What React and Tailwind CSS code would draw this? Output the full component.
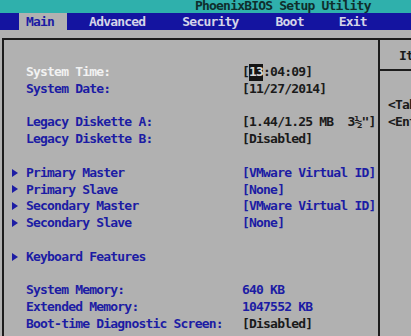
import React from "react";

const ROWS = [
  { label: "System Time:", value: "time", labelTone: "white" },
  { label: "System Date:", value: "[11/27/2014]", valueTone: "black" },
  null,
  { label: "Legacy Diskette A:", value: "[1.44/1.25 MB  3½\"]", valueTone: "black" },
  { label: "Legacy Diskette B:", value: "[Disabled]", valueTone: "black" },
  null,
  { label: "Primary Master", value: "[VMware Virtual ID]", arrow: true },
  { label: "Primary Slave", value: "[None]", arrow: true },
  { label: "Secondary Master", value: "[VMware Virtual ID]", arrow: true },
  { label: "Secondary Slave", value: "[None]", arrow: true },
  null,
  { label: "Keyboard Features", arrow: true },
  null,
  { label: "System Memory:", value: "640 KB" },
  { label: "Extended Memory:", value: "1047552 KB" },
  { label: "Boot-time Diagnostic Screen:", value: "[Disabled]", valueTone: "black" },
];

const TABS = [
  { name: "Main", pad: "pl-[7px] pr-[13px]", active: true },
  { name: "Advanced", pad: "pl-[22px]" },
  { name: "Security", pad: "pl-[37px]" },
  { name: "Boot", pad: "pl-[37px]" },
  { name: "Exit", pad: "pl-[35px]" },
];

function Arrow() {
  return (
    <svg width="6" height="8" viewBox="0 0 6 8" className="mt-[-1px]">
      <path d="M0 0 L6 4 L0 8 Z" fill="#1c1ca4" />
    </svg>
  );
}

function Row({ row }) {
  if (!row) return <div className="h-[16.8px]" />;
  const labelColor = row.labelTone === "white" ? "text-[#f2f2f2]" : "text-[#1c1ca4]";
  const valueColor = row.valueTone === "black" ? "text-[#1a1a1a]" : "text-[#1c1ca4]";
  return (
    <div className="flex items-center h-[16.8px] whitespace-pre">
      <div className="w-[14px] flex items-center">{row.arrow && <Arrow />}</div>
      <div className={`w-[216px] ${labelColor}`}>{row.label}</div>
      {row.value === "time" ? (
        <div className="text-[#1a1a1a] flex">
          <span>[</span>
          <span className="bg-[#141414] text-[#d8d8d8]">13</span>
          <span>:04:09]</span>
        </div>
      ) : (
        <div className={valueColor}>{row.value}</div>
      )}
    </div>
  );
}

export default function App() {
  return (
    <div className="w-[411px] h-[336px] overflow-hidden bg-[#b1b1b1] font-['DejaVu_Sans_Mono',monospace] font-bold text-[13px] tracking-[-0.8px]">
      {/* title bar */}
      <div className="h-[13px] bg-[#2fb0ac] text-[#0f2e2c] leading-[13px] pl-[195px] whitespace-pre overflow-hidden">
        <div className="-mt-[1px]">PhoenixBIOS Setup Utility</div>
      </div>

      <div className="flex h-[323px]">
        <div className="w-[5px] bg-[#dadada]" />
        <div className="flex-1 flex flex-col">
          {/* menu bar */}
          <div className="h-[17px] bg-[#1414a0] flex pl-[19px] leading-[17px]">
            {TABS.map((t) => (
              <div
                key={t.name}
                className={`${t.pad} ${t.active ? "bg-[#b1b1b1] text-[#1c1ca4]" : "text-[#d4d4e8]"}`}
              >
                {t.name}
              </div>
            ))}
          </div>
          <div className="h-[8px]" />

          {/* main panel */}
          <div className="flex-1 ml-[2px] border-l-2 border-t-2 border-[#1c1c1c] flex">
            <div className="w-[374px] pl-[8px] pt-[24px] leading-[16.8px]">
              {ROWS.map((r, i) => (
                <Row key={i} row={r} />
              ))}
            </div>
            <div className="flex-1 border-l-2 border-[#1c1c1c] flex flex-col whitespace-pre">
              <div className="h-[31px] border-b-2 border-[#1c1c1c] pl-[19px] pt-[8px] text-[#1a1a1a] leading-[16.8px]">
                Item Specific Help
              </div>
              <div className="pl-[8px] pt-[26px] text-[#1a1a1a] leading-[16.8px]">
                <div>&lt;Tab&gt;, &lt;Shift-Tab&gt;</div>
                <div>&lt;Enter&gt; selects field.</div>
              </div>
            </div>
          </div>
        </div>
      </div>
    </div>
  );
}
